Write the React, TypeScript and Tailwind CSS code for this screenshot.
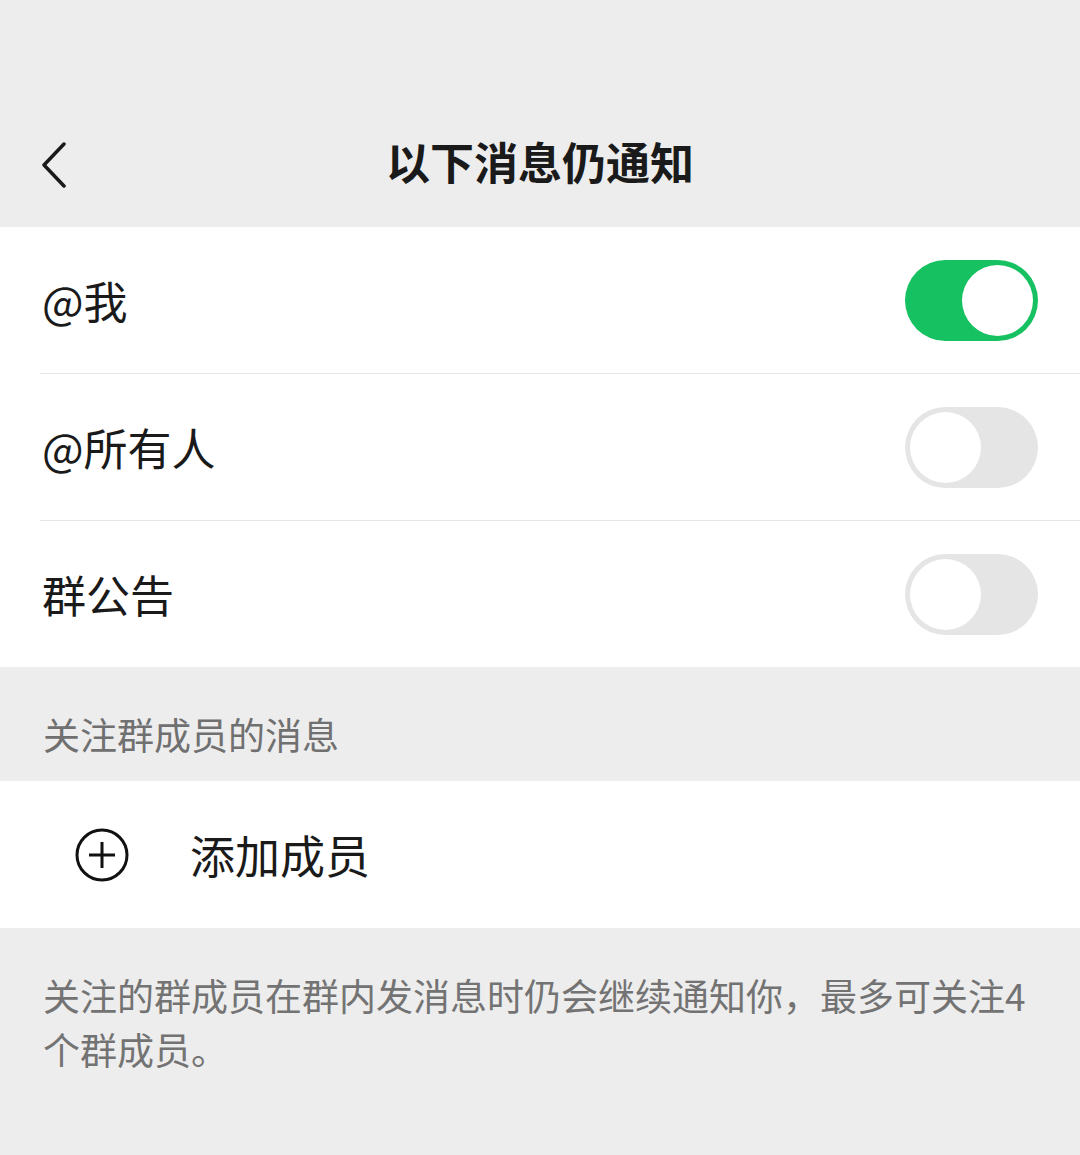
import React, { useState } from "react";

const font = { fontFamily: '"Noto Sans CJK SC", "Noto Sans", sans-serif' };

function Toggle({ on, onClick }: { on: boolean; onClick: () => void }) {
  return (
    <button
      onClick={onClick}
      className={
        on
          ? "w-[133px] h-[81px] rounded-full bg-[#15c160] p-[5px] flex justify-end items-center"
          : "w-[133px] h-[81px] rounded-full bg-[#e5e5e5] p-[5px] flex justify-start items-center"
      }
    >
      <span className="w-[71px] h-[71px] rounded-full bg-white block" />
    </button>
  );
}

export default function App() {
  const [me, setMe] = useState(true);
  const [all, setAll] = useState(false);
  const [notice, setNotice] = useState(false);

  const rows = [
    { label: "@我", on: me, toggle: () => setMe(!me) },
    { label: "@所有人", on: all, toggle: () => setAll(!all) },
    { label: "群公告", on: notice, toggle: () => setNotice(!notice) },
  ];

  return (
    <div className="w-[1080px] min-h-[1155px] bg-[#ededed] text-[#1a1a1a]" style={font}>
      {/* nav bar */}
      <div className="h-[227px] pt-[94px] flex items-center relative">
        <button className="absolute left-[36px] top-[140px] w-[36px] h-[50px] flex items-center justify-center">
          <svg width="30" height="46" viewBox="0 0 30 46" fill="none">
            <path d="M25 2 L5 23 L25 44" stroke="#1a1a1a" strokeWidth="3.5" strokeLinecap="round" strokeLinejoin="round" />
          </svg>
        </button>
        <h1 className="flex-1 text-center text-[44px] font-bold leading-none">以下消息仍通知</h1>
      </div>

      {/* toggles */}
      <div className="bg-white">
        {rows.map((r, i) => (
          <div key={r.label} className="pl-[40px]">
            <div
              className={
                i < rows.length - 1
                  ? "h-[147px] flex items-center justify-between pr-[42px] border-b border-[#e6e6e6]"
                  : "h-[146px] flex items-center justify-between pr-[42px]"
              }
            >
              <span className="text-[44px] leading-none pl-[2px]">{r.label}</span>
              <Toggle on={r.on} onClick={r.toggle} />
            </div>
          </div>
        ))}
      </div>

      {/* section header */}
      <div className="h-[114px] flex items-center pl-[43px] pt-[20px]">
        <span className="text-[37px] text-[#707070] leading-none">关注群成员的消息</span>
      </div>

      {/* add member */}
      <div className="bg-white h-[147px] flex items-center">
        <div className="w-[190px] flex items-center pl-[75px]">
          <svg width="54" height="54" viewBox="0 0 54 54" fill="none">
            <circle cx="27" cy="27" r="25" stroke="#111" strokeWidth="3" />
            <path d="M27 14 V40 M14 27 H40" stroke="#111" strokeWidth="3" />
          </svg>
        </div>
        <span className="text-[45px] leading-none">添加成员</span>
      </div>

      {/* footer note */}
      <div className="pl-[43px] pr-[40px] pt-[40px]">
        <p className="text-[37px] leading-[54px] text-[#737373]">
          关注的群成员在群内发消息时仍会继续通知你，最多可关注4个群成员。
        </p>
      </div>
    </div>
  );
}
